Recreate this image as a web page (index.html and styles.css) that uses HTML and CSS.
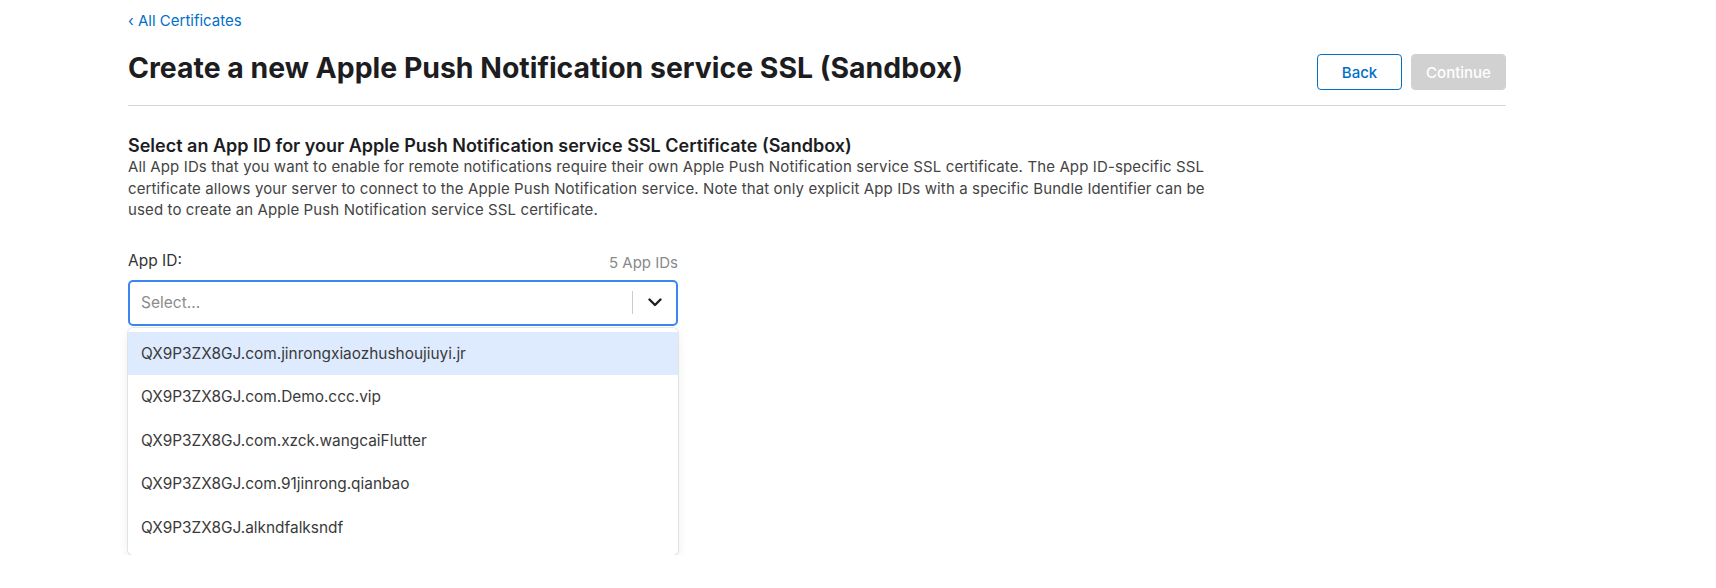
FILE: index.html
```html
<!DOCTYPE html>
<html lang="en">
<head>
<meta charset="utf-8">
<title>Create a new Apple Push Notification service SSL (Sandbox)</title>
<link rel="stylesheet" href="styles.css">
</head>
<body>
<div class="page">
  <a class="crumb" href="#">&lsaquo; All Certificates</a>
  <div class="header">
    <h1 class="title">Create a new Apple Push Notification service SSL (Sandbox)</h1>
    <div class="actions">
      <button class="btn btn-back">Back</button>
      <button class="btn btn-continue" disabled>Continue</button>
    </div>
  </div>
  <section class="section">
    <h2 class="section-title">Select an App ID for your Apple Push Notification service SSL Certificate (Sandbox)</h2>
    <p class="section-desc">All App IDs that you want to enable for remote notifications require their own Apple Push Notification service SSL certificate. The App ID-specific SSL certificate allows your server to connect to the Apple Push Notification service. Note that only explicit App IDs with a specific Bundle Identifier can be used to create an Apple Push Notification service SSL certificate.</p>
    <div class="field">
      <div class="field-head">
        <span class="field-label">App ID:</span>
        <span class="field-count">5 App IDs</span>
      </div>
      <div class="select">
        <div class="select-value">Select...</div>
        <span class="select-sep"></span>
        <span class="select-ind">
          <svg width="14" height="9" viewBox="0 0 14 9"><path d="M1.5 1.5 L7 7 L12.5 1.5" fill="none" stroke="#1f1f1f" stroke-width="2.4" stroke-linecap="round" stroke-linejoin="round"/></svg>
        </span>
      </div>
      <div class="menu">
        <div class="option focused">QX9P3ZX8GJ.com.jinrongxiaozhushoujiuyi.jr</div>
        <div class="option">QX9P3ZX8GJ.com.Demo.ccc.vip</div>
        <div class="option">QX9P3ZX8GJ.com.xzck.wangcaiFlutter</div>
        <div class="option">QX9P3ZX8GJ.com.91jinrong.qianbao</div>
        <div class="option">QX9P3ZX8GJ.alkndfalksndf</div>
      </div>
    </div>
  </section>
</div>
</body>
</html>
```

FILE: styles.css
```css
* { box-sizing: border-box; }
html, body { margin: 0; padding: 0; background: #ffffff; }
body {
  font-family: Inter, "Liberation Sans", Arial, sans-serif;
  color: #333333;
  -webkit-font-smoothing: antialiased;
}
.page {
  width: 1506px;
  padding-left: 128px;
  padding-top: 11px;
}
.crumb {
  display: block;
  font-size: 15px;
  line-height: 20px;
  height: 20px;
  color: #0070c9;
  text-decoration: none;
}
.header {
  display: flex;
  justify-content: space-between;
  align-items: flex-start;
  padding-top: 23px;
  padding-bottom: 15px;
  border-bottom: 1px solid #d6d6d6;
}
.title {
  margin: -2px 0 0 0;
  font-size: 28.4px;
  line-height: 32px;
  font-weight: 700;
  color: #1d1d1f;
}
.actions {
  display: flex;
  gap: 9px;
}
.btn {
  height: 36px;
  border-radius: 4px;
  font-family: inherit;
  font-size: 15px;
  font-weight: 500;
  padding: 0;
  cursor: pointer;
}
.btn-back {
  width: 85px;
  background: #ffffff;
  border: 1px solid #0070c9;
  color: #0070c9;
}
.btn-continue {
  width: 95px;
  background: #d1d1d1;
  border: 1px solid #d1d1d1;
  color: #ffffff;
}
.section {
  padding-top: 29px;
}
.section-title {
  margin: 0;
  font-size: 18px;
  line-height: 21px;
  font-weight: 600;
  color: #1d1d1f;
}
.section-desc {
  margin: 0;
  max-width: 1100px;
  font-size: 15px;
  line-height: 21.5px;
  letter-spacing: 0.12px;
  color: #444444;
}
.field {
  width: 550px;
  padding-top: 30px;
}
.field-head {
  display: flex;
  justify-content: space-between;
  align-items: baseline;
  height: 20px;
}
.field-label {
  font-size: 15.5px;
  color: #333333;
}
.field-count {
  font-size: 15px;
  color: #8a8a8a;
  position: relative;
  top: 2px;
}
.select {
  margin-top: 9px;
  height: 46px;
  border: 2px solid #3b86f0;
  border-radius: 5px;
  display: flex;
  align-items: center;
}
.select-value {
  flex: 1;
  padding-left: 11px;
  font-size: 15.5px;
  color: #8c8c8c;
}
.select-sep {
  width: 1px;
  height: 23px;
  background: #cccccc;
}
.select-ind {
  width: 43px;
  display: flex;
  justify-content: center;
  align-items: center;
}
.menu {
  margin-top: 2px;
  border-radius: 5px;
  background: #ffffff;
  box-shadow: 0 0 0 1px rgba(0,0,0,0.08), 0 4px 11px rgba(0,0,0,0.08);
  padding: 4px 0 6px;
}
.option {
  padding: 12px 13px;
  font-size: 15.4px;
  line-height: 19.5px;
  color: #3a3a3a;
}
.option.focused {
  background: #deebff;
}
```
